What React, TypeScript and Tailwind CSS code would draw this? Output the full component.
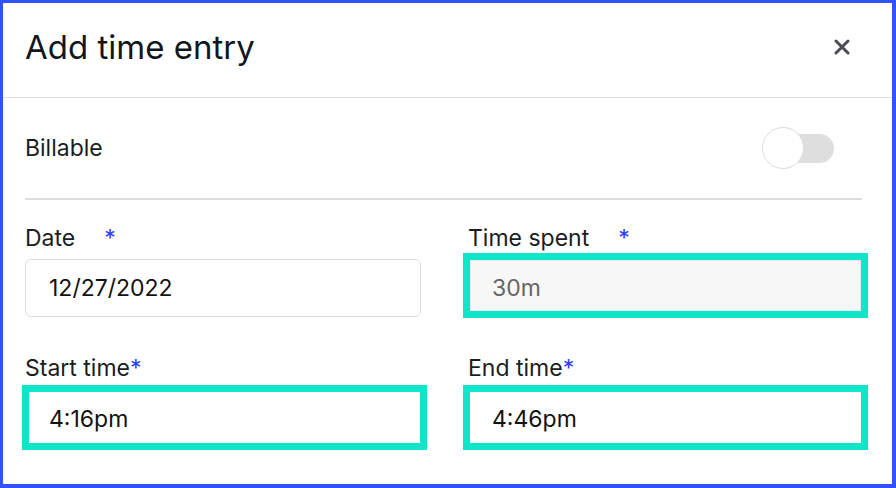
import type { ReactNode } from 'react'

function Label({ text, gap }: { text: string; gap?: boolean }) {
  return (
    <div className="h-[28px] leading-[28px] text-[23px] text-[#1a1d21]">
      {text}
      <span className={`text-[#2b3dff] ${gap ? 'ml-[29px]' : ''}`}>*</span>
    </div>
  )
}

function Outlined({ children, className }: { children: ReactNode; className: string }) {
  return (
    <div className={`w-[405px] h-[65px] border-[7px] border-[#0fe6c9] ${className}`}>
      {children}
    </div>
  )
}

export default function App() {
  return (
    <div
      className="w-[896px] h-[488px] bg-white border-t-[3px] border-l-[3px] border-r-4 border-b-4 border-[#3153ff] flex flex-col overflow-hidden"
      style={{ fontFamily: 'Inter, "Noto Sans", sans-serif' }}
    >
      {/* Header */}
      <div className="h-[95px] shrink-0 flex items-center justify-between pl-[22px] pr-[42px] border-b border-[#dedede]">
        <h1 className="text-[33px] leading-[40px] text-[#10161d] -mt-[6px]">Add time entry</h1>
        <button type="button" aria-label="Close" className="text-[#4a4d55] -mt-[6px]">
          <svg width="16" height="16" viewBox="0 0 16 16" fill="none" stroke="currentColor" strokeWidth={3} strokeLinecap="round">
            <path d="M2 2L14 14M14 2L2 14" />
          </svg>
        </button>
      </div>

      {/* Billable */}
      <div className="h-[100px] shrink-0 flex items-center justify-between pl-[22px] pr-[58px]">
        <span className="text-[23px] text-[#1a1d21]">Billable</span>
        <div className="relative w-[72px] h-[42px]">
          <div className="absolute right-0 top-[7px] w-[55px] h-[29px] rounded-full bg-[#dedede]" />
          <div className="absolute left-0 top-0 w-[42px] h-[42px] rounded-full bg-white border border-[#dddddd]" />
        </div>
      </div>
      <div className="h-[2px] shrink-0 bg-[#dcdcdc] ml-[22px] mr-[30px]" />

      {/* Fields */}
      <div className="grid grid-cols-[396px_396px] gap-x-[47px] gap-y-[36px] pl-[22px] pt-[24px]">
        <div>
          <Label text="Date" gap />
          <div className="mt-[7px] h-[58px] rounded-[6px] border border-[#dddddd] pl-[23px] flex items-center text-[23px] text-[#111]">
            12/27/2022
          </div>
        </div>
        <div>
          <Label text="Time spent" gap />
          <Outlined className="mt-[1px] -ml-[5px]">
            <div className="h-full bg-[#f7f7f7] border border-[#e6e6e6] pl-[21px] pt-[6px] flex items-center text-[23px] text-[#666]">
              30m
            </div>
          </Outlined>
        </div>
        <div>
          <Label text="Start time" />
          <Outlined className="mt-[3px] -ml-[3px]">
            <div className="h-full bg-white pl-[20px] pt-[4px] flex items-center text-[23px] text-[#111]">4:16pm</div>
          </Outlined>
        </div>
        <div>
          <Label text="End time" />
          <Outlined className="mt-[3px] -ml-[5px]">
            <div className="h-full bg-white pl-[22px] pt-[4px] flex items-center text-[23px] text-[#111]">4:46pm</div>
          </Outlined>
        </div>
      </div>
    </div>
  )
}
